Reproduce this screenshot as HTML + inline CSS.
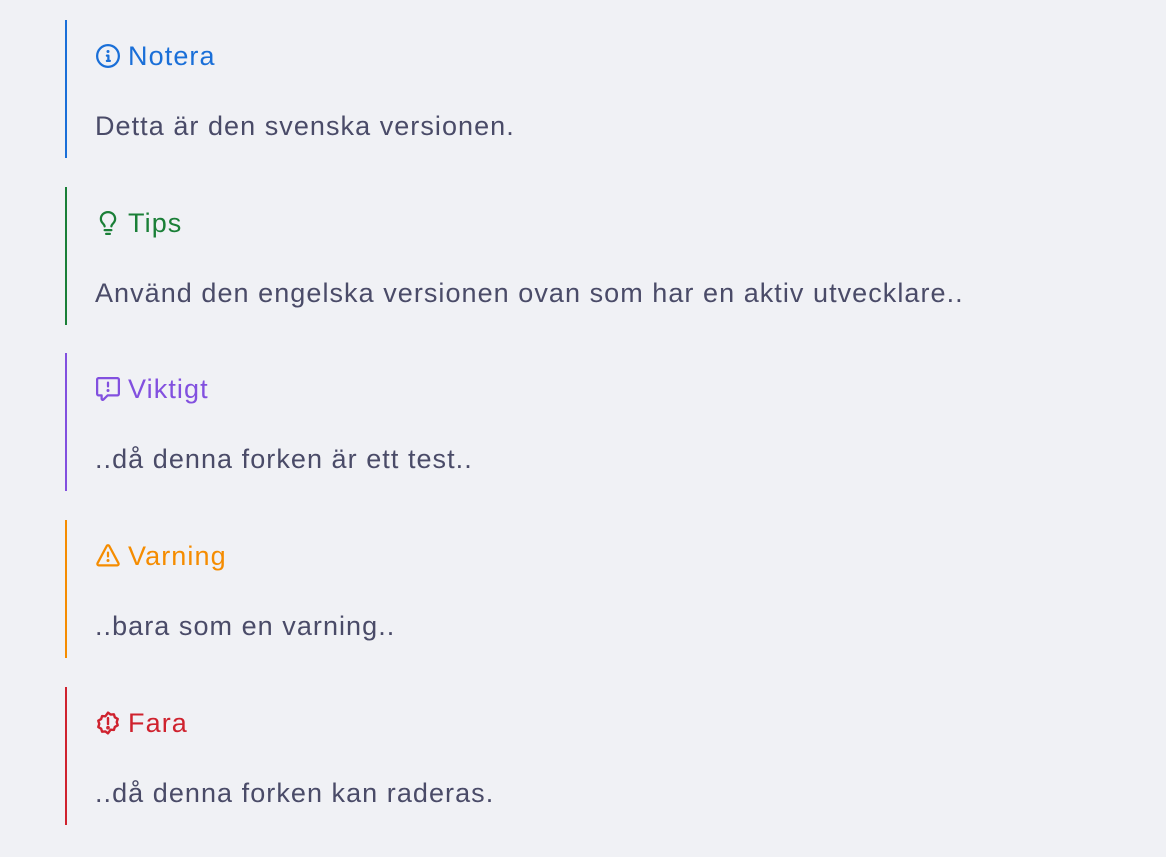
<!DOCTYPE html>
<html><head><meta charset="utf-8"><style>
html,body{margin:0;padding:0;background:#f0f1f5;width:1166px;height:857px;overflow:hidden}
body{font-family:"Liberation Sans",sans-serif;color:#4a4b68}
.a{position:absolute;left:65px;width:1000px;height:138px;border-left:2px solid}
.t{position:absolute;left:29px;top:18px;font-size:27px;letter-spacing:1.1px;line-height:36px;display:flex;align-items:center}
.t svg{width:24px;height:24px;margin-right:8px;fill:currentColor}
.b{position:absolute;left:28px;top:88px;font-size:27px;letter-spacing:1.05px;line-height:36px;color:#4a4b68}
</style></head><body>
<div class="a" style="top:20px;border-color:#1a6fd8;color:#1a6fd8"><div class="t"><svg viewBox="0 0 16 16"><path d="M0 8a8 8 0 1 1 16 0A8 8 0 0 1 0 8Zm8-6.5a6.5 6.5 0 1 0 0 13 6.5 6.5 0 0 0 0-13ZM6.5 7.75A.75.75 0 0 1 7.25 7h1a.75.75 0 0 1 .75.75v2.75h.25a.75.75 0 0 1 0 1.5h-2a.75.75 0 0 1 0-1.5h.25v-2h-.25a.75.75 0 0 1-.75-.75ZM8 6a1 1 0 1 1 0-2 1 1 0 0 1 0 2Z"/></svg>Notera</div><div class="b">Detta är den svenska versionen.</div></div>
<div class="a" style="top:187px;border-color:#1a7f37;color:#1a7f37"><div class="t"><svg viewBox="0 0 16 16"><path d="M8 1.5c-2.363 0-4 1.69-4 3.75 0 .984.424 1.625.984 2.304l.214.253c.223.264.47.556.673.848.284.411.537.896.621 1.49a.75.75 0 0 1-1.484.211c-.04-.282-.163-.547-.37-.847a8.456 8.456 0 0 0-.542-.68c-.084-.1-.173-.205-.268-.32C3.201 7.75 2.5 6.766 2.5 5.25 2.5 2.31 4.863 0 8 0s5.5 2.31 5.5 5.25c0 1.516-.701 2.5-1.328 3.259-.095.115-.184.22-.268.319-.207.245-.383.453-.541.681-.208.3-.33.565-.37.847a.751.751 0 0 1-1.485-.212c.084-.593.337-1.078.621-1.489.203-.292.45-.584.673-.848.075-.088.147-.173.213-.253.561-.679.985-1.32.985-2.304 0-2.060-1.637-3.750-4-3.750ZM5.75 12h4.5a.75.75 0 0 1 0 1.5h-4.5a.75.75 0 0 1 0-1.5ZM6 15.25a.75.75 0 0 1 .75-.75h2.5a.75.75 0 0 1 0 1.5h-2.5a.75.75 0 0 1-.75-.75Z"/></svg>Tips</div><div class="b">Använd den engelska versionen ovan som har en aktiv utvecklare..</div></div>
<div class="a" style="top:353px;border-color:#8250df;color:#8250df"><div class="t"><svg viewBox="0 0 16 16"><path d="M0 1.75C0 .784.784 0 1.75 0h12.5C15.216 0 16 .784 16 1.75v9.5A1.75 1.75 0 0 1 14.250 13H8.06l-2.573 2.573A1.458 1.458 0 0 1 3 14.543V13H1.75A1.75 1.75 0 0 1 0 11.25Zm1.75-.25a.25.25 0 0 0-.25.25v9.5c0 .138.112.25.25.25h2a.75.75 0 0 1 .75.75v2.19l2.72-2.72a.749.749 0 0 1 .53-.22h6.5a.25.25 0 0 0 .25-.25v-9.5a.25.25 0 0 0-.25-.25Zm7 2.25v2.5a.75.75 0 0 1-1.5 0v-2.5a.75.75 0 0 1 1.5 0ZM9 9a1 1 0 1 1-2 0 1 1 0 0 1 2 0Z"/></svg>Viktigt</div><div class="b">..då denna forken är ett test..</div></div>
<div class="a" style="top:520px;border-color:#f58c00;color:#f58c00"><div class="t"><svg viewBox="0 0 16 16"><path d="M6.457 1.047c.659-1.234 2.427-1.234 3.086 0l6.082 11.378A1.75 1.75 0 0 1 14.082 15H1.918a1.75 1.75 0 0 1-1.543-2.575Zm1.763.707a.25.25 0 0 0-.44 0L1.698 13.132a.25.25 0 0 0 .22.368h12.164a.25.25 0 0 0 .22-.368Zm.53 3.996v2.5a.75.75 0 0 1-1.5 0v-2.5a.75.75 0 0 1 1.5 0ZM9 11a1 1 0 1 1-2 0 1 1 0 0 1 2 0Z"/></svg>Varning</div><div class="b">..bara som en varning..</div></div>
<div class="a" style="top:687px;border-color:#cf222e;color:#cf222e"><div class="t"><svg viewBox="1 1 22 22" style="fill:none;stroke:currentColor;stroke-width:2.2;stroke-linejoin:round"><path d="M12 2.5l2.4 1.8 3-.3.9 2.8 2.6 1.5-.9 2.9.9 2.9-2.6 1.5-.9 2.8-3-.3L12 21.5l-2.4-1.8-3 .3-.9-2.8-2.6-1.5.9-2.9-.9-2.9 2.6-1.5.9-2.8 3 .3Z"/><path d="M12 7.5v5.5" stroke-linecap="round"/><circle cx="12" cy="16.3" r=".6" fill="currentColor"/></svg>Fara</div><div class="b">..då denna forken kan raderas.</div></div>
</body></html>
